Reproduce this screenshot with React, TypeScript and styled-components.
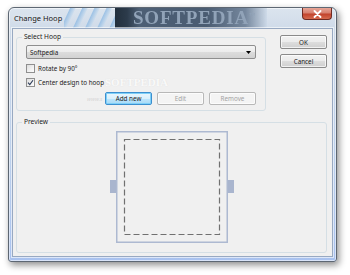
import React from "react";
import styled, { createGlobalStyle } from "styled-components";

const Global = createGlobalStyle`
  html, body { margin: 0; padding: 0; background: #ffffff; }
  body { font-family: "Noto Sans", "Open Sans", sans-serif; font-size: 6.3px; color: #1b1b1b; }
  * { box-sizing: border-box; }
`;

const Page = styled.div`
  width: 350px;
  height: 275px;
  padding: 7px 0 0 8px;
`;

const Window = styled.div`
  width: 329px;
  height: 255px;
  display: flex;
  flex-direction: column;
  border: 1px solid #5d6773;
  border-radius: 6px 6px 3px 3px;
  background: linear-gradient(180deg, #dbe4ee 0%, #cdd9e8 10%, #bcd0ec 60%, #a9c2ef 100%);
  box-shadow: 2px 3px 7px rgba(0, 0, 0, 0.45), inset 0 0 0 1px rgba(255, 255, 255, 0.55);
  padding: 0 3px 4px 3px;
`;

const TitleBar = styled.div`
  position: relative;
  height: 20px;
  display: flex;
  align-items: flex-start;
  justify-content: space-between;
  overflow: hidden;
`;

const TitleText = styled.span`
  position: relative;
  z-index: 2;
  margin: 5px 0 0 2px;
  font-size: 7.5px;
  color: #151515;
  text-shadow: 0 0 4px rgba(255, 255, 255, 0.9);
`;

const Streaks = styled.div`
  position: absolute;
  left: 52px;
  top: 0;
  width: 52px;
  height: 20px;
  background: repeating-linear-gradient(115deg, rgba(160, 196, 228, 0.0) 0px, rgba(160, 196, 228, 0.0) 5px, rgba(150, 190, 228, 0.85) 6px, rgba(190, 214, 236, 0.6) 10px, rgba(160, 196, 228, 0) 11px);
`;

const Banner = styled.div`
  position: absolute;
  left: 103px;
  top: 0;
  width: 152px;
  height: 20px;
  background: linear-gradient(90deg, #222f3c 0%, #2c3b4b 8%, #4d5f75 16%, #4a5c72 60%, #76889e 86%, rgba(200, 214, 230, 0.6) 100%);
  filter: blur(0.4px);
  display: flex;
  align-items: center;
  padding-left: 18px;
`;

const BannerText = styled.span`
  font-family: "Liberation Serif", "DejaVu Serif", serif;
  font-weight: bold;
  font-size: 19px;
  letter-spacing: 0.8px;
  color: #91a3b8;
  filter: blur(0.7px);
  sup { font-size: 6px; }
`;

const CloseButton = styled.div`
  position: relative;
  z-index: 2;
  margin: 0 1px 0 0;
  width: 30px;
  height: 12px;
  border: 1px solid #6e2a22;
  border-top: none;
  border-radius: 0 0 4px 4px;
  background: linear-gradient(180deg, #e7a597 0%, #d7806f 45%, #c2432c 55%, #d56a4e 100%);
  display: flex;
  align-items: center;
  justify-content: center;
`;

const Client = styled.div`
  position: relative;
  flex: 1;
  background: #f0f0f0;
  border: 1px solid #98a9c2;
  box-shadow: 0 0 0 1px rgba(255, 255, 255, 0.6);
  padding: 3px 5px 3px 3px;
  display: flex;
  flex-direction: column;
  gap: 6px;
`;

const TopRow = styled.div`
  display: flex;
  justify-content: space-between;
  align-items: flex-start;
`;

const Group = styled.fieldset<{ $w?: number }>`
  margin: 0;
  width: ${(p) => (p.$w ? `${p.$w}px` : "auto")};
  border: 1px solid #d5dfe5;
  border-radius: 3px;
  padding: 0;
  min-width: 0;
`;

const Legend = styled.legend`
  margin-left: 5px;
  padding: 0 2px;
  line-height: 10px;
  font-size: 6.6px;
  color: #1b1b1b;
`;

const SelectBody = styled.div`
  padding: 3px 9px 5px 9px;
  display: flex;
  flex-direction: column;
  gap: 5px;
`;

const Combo = styled.div`
  height: 14px;
  border: 1px solid #8e8e8e;
  border-radius: 2px;
  background: linear-gradient(180deg, #f4f4f4 0%, #ebebeb 50%, #dcdcdc 51%, #d2d2d2 100%);
  display: flex;
  align-items: center;
  justify-content: space-between;
  padding: 0 4px 0 3px;
`;

const CheckRow = styled.label`
  height: 9px;
  display: flex;
  align-items: center;
  gap: 3px;
  line-height: 9px;
  color: #1b1b1b;
`;

const Box = styled.span`
  width: 9px;
  height: 9px;
  border: 1px solid #8f8f8f;
  background: linear-gradient(135deg, #dcdcdc 0%, #f2f2f2 60%, #fcfcfc 100%);
  display: flex;
  align-items: center;
  justify-content: center;
`;

const ButtonRow = styled.div`
  display: flex;
  justify-content: flex-end;
  gap: 5px;
`;

const Button = styled.div<{ $disabled?: boolean; $focus?: boolean; $h?: number }>`
  width: 47px;
  height: ${(p) => p.$h ?? 13}px;
  border: 1px solid ${(p) => (p.$focus ? "#3c8fcf" : p.$disabled ? "#b8b8b8" : "#8a8a8a")};
  border-radius: 2px;
  background: ${(p) =>
    p.$focus
      ? "linear-gradient(180deg, #eaf6fd 0%, #d9f0fc 50%, #bee6fd 51%, #a7d9f5 100%)"
      : p.$disabled
      ? "#f4f4f4"
      : "linear-gradient(180deg, #f2f2f2 0%, #ebebeb 50%, #dddddd 51%, #cfcfcf 100%)"};
  box-shadow: ${(p) => (p.$focus ? "inset 0 0 0 1px #7ed0f8" : "inset 0 0 0 1px rgba(255,255,255,0.7)")};
  display: flex;
  align-items: center;
  justify-content: center;
  color: ${(p) => (p.$disabled ? "#a3a3a3" : "#1b1b1b")};
`;

const SideButtons = styled.div`
  margin-top: 3px;
  display: flex;
  flex-direction: column;
  gap: 5px;
`;

const PreviewBody = styled.div`
  padding: 4px 0 9px 0;
  display: flex;
  justify-content: center;
`;

const Watermark = styled.span`
  position: absolute;
  left: 92px;
  top: 47px;
  font-family: "Liberation Serif", serif;
  font-weight: bold;
  font-size: 11px;
  color: rgba(255, 255, 255, 0.85);
  text-shadow: 0 0 1px rgba(170, 170, 170, 0.3);
  pointer-events: none;
`;

const WatermarkUrl = styled.span`
  position: absolute;
  left: 74px;
  top: 66px;
  font-size: 5.5px;
  font-style: italic;
  color: rgba(190, 190, 190, 0.55);
  pointer-events: none;
`;

export default function App() {
  return (
    <>
      <Global />
      <Page>
        <Window>
          <TitleBar>
            <Streaks />
            <Banner>
              <BannerText>
                SOFTPEDIA<sup>™</sup>
              </BannerText>
            </Banner>
            <TitleText>Change Hoop</TitleText>
            <CloseButton>
              <svg width="9" height="8" viewBox="0 0 9 8">
                <path d="M1.5 1 L7.5 7 M7.5 1 L1.5 7" stroke="#ffffff" strokeWidth="1.8" strokeLinecap="round" />
              </svg>
            </CloseButton>
          </TitleBar>
          <Client>
            <TopRow>
              <Group $w={250}>
                <Legend>Select Hoop</Legend>
                <SelectBody>
                  <Combo>
                    <span>Softpedia</span>
                    <svg width="5" height="3" viewBox="0 0 5 3">
                      <path d="M0 0 H5 L2.5 3 Z" fill="#000" />
                    </svg>
                  </Combo>
                  <CheckRow>
                    <Box />
                    Rotate by 90°
                  </CheckRow>
                  <CheckRow>
                    <Box>
                      <svg width="7" height="7" viewBox="0 0 7 7">
                        <path d="M1 3.6 L2.8 5.6 L6 1.2" fill="none" stroke="#2b3a57" strokeWidth="1.1" />
                      </svg>
                    </Box>
                    Center design to hoop
                  </CheckRow>
                  <ButtonRow>
                    <Button $focus>Add new</Button>
                    <Button $disabled>Edit</Button>
                    <Button $disabled>Remove</Button>
                  </ButtonRow>
                </SelectBody>
              </Group>
              <SideButtons>
                <Button $h={14}>OK</Button>
                <Button $h={14}>Cancel</Button>
              </SideButtons>
            </TopRow>
            <Group>
              <Legend>Preview</Legend>
              <PreviewBody>
                <svg width="124" height="112" viewBox="0 0 124 112">
                  <rect x="0" y="49" width="7" height="13" fill="#a9b5ce" />
                  <rect x="117" y="49" width="7" height="13" fill="#a9b5ce" />
                  <rect x="6.75" y="0.75" width="110.5" height="110.5" fill="#f0f0f0" stroke="#adb9d1" strokeWidth="1.5" />
                  <rect x="14.5" y="8.5" width="95" height="95" fill="none" stroke="#707070" strokeWidth="1.2" strokeDasharray="6 3" />
                </svg>
              </PreviewBody>
            </Group>
            <Watermark>SOFTPEDIA</Watermark>
            <WatermarkUrl>www.s</WatermarkUrl>
          </Client>
        </Window>
      </Page>
    </>
  );
}
